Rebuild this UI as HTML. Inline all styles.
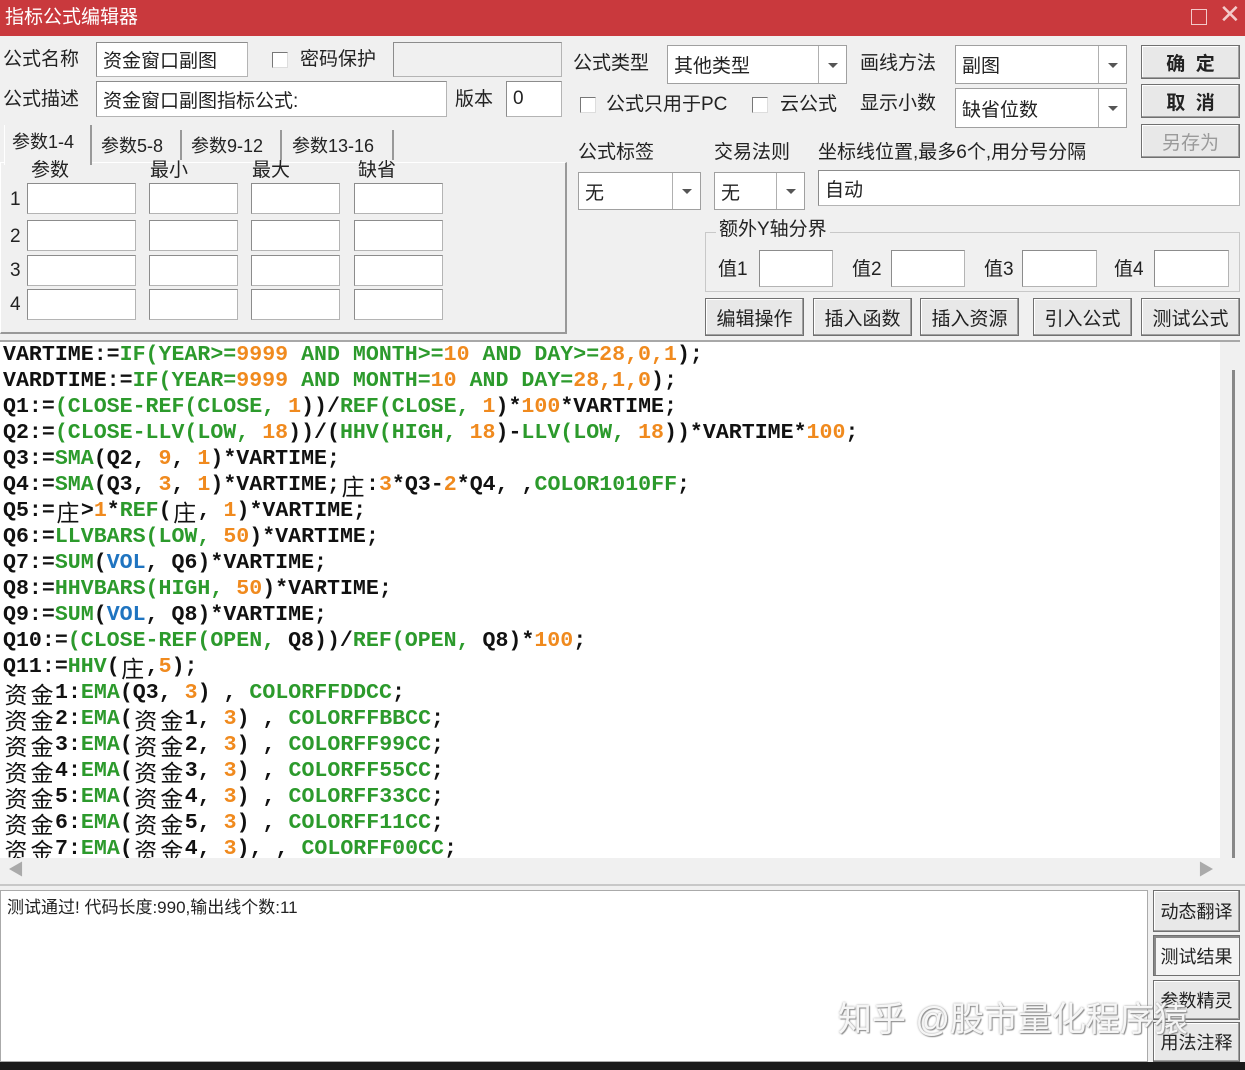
<!DOCTYPE html>
<html><head><meta charset="utf-8"><style>
*{box-sizing:border-box;margin:0;padding:0}
body{width:1245px;height:1070px;overflow:hidden;background:#f0f0f0;position:relative;font-family:"Liberation Sans","Noto Sans CJK SC",sans-serif;font-size:19px;color:#222}
.a{position:absolute;white-space:nowrap}
.t{position:absolute;white-space:nowrap;line-height:22px}
.in{position:absolute;background:#fff;border:1px solid #b4b4b4;border-top-color:#8c8c8c;border-left-color:#8c8c8c;padding-left:6px;display:flex;align-items:center}
.sel{position:absolute;background:#fff;border:1px solid #a0a0a0;padding-left:6px;display:flex;align-items:center}
.sel .ar{position:absolute;right:0;top:0;bottom:0;width:28px;border-left:1px solid #b0b0b0}
.sel .ar:after{content:"";position:absolute;left:9px;top:50%;margin-top:-2px;border-left:5px solid transparent;border-right:5px solid transparent;border-top:5px solid #555}
.btn{position:absolute;background:#e8e8e8;border:1px solid #707070;box-shadow:inset -1px -1px 0 #a0a0a0,inset 1px 1px 0 #fff;display:flex;align-items:center;justify-content:center;font-size:19px}
.cb{position:absolute;width:16px;height:16px;background:#fff;border:1px solid #777;border-right-color:#ddd;border-bottom-color:#ddd}
#code{position:absolute;left:0;top:342px;width:1220px;height:516px;background:#fff;overflow:hidden;font-family:"Liberation Mono",monospace;font-weight:bold;font-size:21.6px;color:#111;padding-left:3px}
#code div{height:26px;line-height:26px;white-space:pre;overflow:hidden}
g{color:#2c9a2c}o{color:#f08a1e}b{color:#1f74c0}
c{display:inline-block;vertical-align:top;height:26px;overflow:hidden;width:26px;font-family:"Noto Sans CJK SC",sans-serif;font-weight:normal;font-size:23px;text-align:center;line-height:26px}
</style></head><body>
<div class="a" style="left:0;top:0;width:1245px;height:36px;background:#c9393d"></div>
<div class="t" style="left:5px;top:7px;color:#fff;font-size:19px">指标公式编辑器</div>
<div class="a" style="left:1191px;top:9px;width:16px;height:16px;border:1.5px solid #f3caca"></div>
<div class="t" style="left:1219px;top:3px;color:#f3caca;font-size:26px;font-weight:200">✕</div>

<div class="t" style="left:3px;top:49px">公式名称</div>
<div class="in" style="left:96px;top:42px;width:152px;height:35px">资金窗口副图</div>
<div class="cb" style="left:272px;top:52px"></div>
<div class="t" style="left:300px;top:49px">密码保护</div>
<div class="in" style="left:393px;top:42px;width:169px;height:35px;background:#f0f0f0"></div>
<div class="t" style="left:3px;top:89px">公式描述</div>
<div class="in" style="left:96px;top:81px;width:351px;height:36px">资金窗口副图指标公式:</div>
<div class="t" style="left:455px;top:89px">版本</div>
<div class="in" style="left:506px;top:81px;width:56px;height:36px">0</div>

<div class="t" style="left:573px;top:53px">公式类型</div>
<div class="sel" style="left:667px;top:45px;width:180px;height:39px">其他类型<span class="ar"></span></div>
<div class="t" style="left:860px;top:53px">画线方法</div>
<div class="sel" style="left:955px;top:45px;width:172px;height:39px">副图<span class="ar"></span></div>
<div class="btn" style="left:1141px;top:45px;width:99px;height:34px;font-weight:bold">确&nbsp;&nbsp;定</div>
<div class="cb" style="left:580px;top:97px"></div>
<div class="t" style="left:606px;top:94px">公式只用于PC</div>
<div class="cb" style="left:752px;top:97px"></div>
<div class="t" style="left:780px;top:94px">云公式</div>
<div class="t" style="left:860px;top:93px">显示小数</div>
<div class="sel" style="left:955px;top:88px;width:172px;height:40px">缺省位数<span class="ar"></span></div>
<div class="btn" style="left:1141px;top:84px;width:99px;height:34px;font-weight:bold">取&nbsp;&nbsp;消</div>
<div class="btn" style="left:1141px;top:124px;width:99px;height:34px;color:#9a9a9a">另存为</div>

<div class="t" style="left:578px;top:142px">公式标签</div>
<div class="t" style="left:714px;top:142px">交易法则</div>
<div class="t" style="left:818px;top:142px">坐标线位置,最多6个,用分号分隔</div>
<div class="sel" style="left:578px;top:172px;width:123px;height:38px">无<span class="ar"></span></div>
<div class="sel" style="left:714px;top:172px;width:91px;height:38px">无<span class="ar"></span></div>
<div class="in" style="left:818px;top:170px;width:422px;height:36px">自动</div>

<div class="a" style="left:705px;top:232px;width:535px;height:60px;border:1px solid #c8c8c8"></div>
<div class="t" style="left:716px;top:219px;background:#f0f0f0;padding:0 3px">额外Y轴分界</div>
<div class="t" style="left:718px;top:259px">值1</div><div class="in" style="left:759px;top:250px;width:74px;height:37px"></div>
<div class="t" style="left:852px;top:259px">值2</div><div class="in" style="left:891px;top:250px;width:74px;height:37px"></div>
<div class="t" style="left:984px;top:259px">值3</div><div class="in" style="left:1022px;top:250px;width:75px;height:37px"></div>
<div class="t" style="left:1114px;top:259px">值4</div><div class="in" style="left:1154px;top:250px;width:75px;height:37px"></div>

<div class="btn" style="left:705px;top:298px;width:99px;height:38px">编辑操作</div>
<div class="btn" style="left:813px;top:298px;width:99px;height:38px">插入函数</div>
<div class="btn" style="left:920px;top:298px;width:99px;height:38px">插入资源</div>
<div class="btn" style="left:1033px;top:298px;width:99px;height:38px">引入公式</div>
<div class="btn" style="left:1141px;top:298px;width:99px;height:38px">测试公式</div>

<div class="a" style="left:0;top:162px;width:567px;height:172px;border:1px solid #fff;border-right:2px solid #999;border-bottom:2px solid #999"></div>
<div class="a" style="left:4px;top:125px;width:88px;height:40px;background:#f0f0f0;border-left:1px solid #fff;border-right:2px solid #999"></div>
<div class="t" style="left:12px;top:131px;font-size:18px">参数1-4</div>
<div class="t" style="left:101px;top:135px;font-size:18px">参数5-8</div>
<div class="a" style="left:180px;top:130px;width:2px;height:30px;background:#999"></div>
<div class="t" style="left:191px;top:135px;font-size:18px">参数9-12</div>
<div class="a" style="left:280px;top:130px;width:2px;height:30px;background:#999"></div>
<div class="t" style="left:292px;top:135px;font-size:18px">参数13-16</div>
<div class="a" style="left:392px;top:130px;width:2px;height:30px;background:#999"></div>
<div class="t" style="left:31px;top:160px">参数</div>
<div class="t" style="left:150px;top:160px">最小</div>
<div class="t" style="left:252px;top:160px">最大</div>
<div class="t" style="left:358px;top:160px">缺省</div>
<div class="t" style="left:10px;top:189px">1</div><div class="t" style="left:10px;top:226px">2</div><div class="t" style="left:10px;top:260px">3</div><div class="t" style="left:10px;top:294px">4</div>
<div class="in" style="left:27px;top:183px;width:109px;height:31px"></div><div class="in" style="left:149px;top:183px;width:89px;height:31px"></div><div class="in" style="left:251px;top:183px;width:89px;height:31px"></div><div class="in" style="left:354px;top:183px;width:89px;height:31px"></div>
<div class="in" style="left:27px;top:220px;width:109px;height:31px"></div><div class="in" style="left:149px;top:220px;width:89px;height:31px"></div><div class="in" style="left:251px;top:220px;width:89px;height:31px"></div><div class="in" style="left:354px;top:220px;width:89px;height:31px"></div>
<div class="in" style="left:27px;top:255px;width:109px;height:31px"></div><div class="in" style="left:149px;top:255px;width:89px;height:31px"></div><div class="in" style="left:251px;top:255px;width:89px;height:31px"></div><div class="in" style="left:354px;top:255px;width:89px;height:31px"></div>
<div class="in" style="left:27px;top:289px;width:109px;height:31px"></div><div class="in" style="left:149px;top:289px;width:89px;height:31px"></div><div class="in" style="left:251px;top:289px;width:89px;height:31px"></div><div class="in" style="left:354px;top:289px;width:89px;height:31px"></div>

<div class="a" style="left:0;top:340px;width:1240px;height:2px;background:#a8a8a8"></div>
<div id="code">
<div>VARTIME:=<g>IF(YEAR&gt;=</g><o>9999</o> <g>AND MONTH&gt;=</g><o>10</o> <g>AND DAY&gt;=</g><o>28,0,1</o>);</div>
<div>VARDTIME:=<g>IF(YEAR=</g><o>9999</o> <g>AND MONTH=</g><o>10</o> <g>AND DAY=</g><o>28,1,0</o>);</div>
<div>Q1:=<g>(CLOSE-REF(CLOSE,</g> <o>1</o>))/<g>REF(CLOSE,</g> <o>1</o>)*<o>100</o>*VARTIME;</div>
<div>Q2:=<g>(CLOSE-LLV(LOW,</g> <o>18</o>))/(<g>HHV(HIGH,</g> <o>18</o>)-<g>LLV(LOW,</g> <o>18</o>))*VARTIME*<o>100</o>;</div>
<div>Q3:=<g>SMA</g>(Q2, <o>9</o>, <o>1</o>)*VARTIME;</div>
<div>Q4:=<g>SMA</g>(Q3, <o>3</o>, <o>1</o>)*VARTIME;<c>庄</c>:<o>3</o>*Q3-<o>2</o>*Q4, ,<g>COLOR1010FF</g>;</div>
<div>Q5:=<c>庄</c>&gt;<o>1</o>*<g>REF</g>(<c>庄</c>, <o>1</o>)*VARTIME;</div>
<div>Q6:=<g>LLVBARS(LOW,</g> <o>50</o>)*VARTIME;</div>
<div>Q7:=<g>SUM</g>(<b>VOL</b>, Q6)*VARTIME;</div>
<div>Q8:=<g>HHVBARS(HIGH,</g> <o>50</o>)*VARTIME;</div>
<div>Q9:=<g>SUM</g>(<b>VOL</b>, Q8)*VARTIME;</div>
<div>Q10:=<g>(CLOSE-REF(OPEN,</g> Q8))/<g>REF(OPEN,</g> Q8)*<o>100</o>;</div>
<div>Q11:=<g>HHV</g>(<c>庄</c>,<o>5</o>);</div>
<div><c>资</c><c>金</c>1:<g>EMA</g>(Q3, <o>3</o>) , <g>COLORFFDDCC</g>;</div>
<div><c>资</c><c>金</c>2:<g>EMA</g>(<c>资</c><c>金</c>1, <o>3</o>) , <g>COLORFFBBCC</g>;</div>
<div><c>资</c><c>金</c>3:<g>EMA</g>(<c>资</c><c>金</c>2, <o>3</o>) , <g>COLORFF99CC</g>;</div>
<div><c>资</c><c>金</c>4:<g>EMA</g>(<c>资</c><c>金</c>3, <o>3</o>) , <g>COLORFF55CC</g>;</div>
<div><c>资</c><c>金</c>5:<g>EMA</g>(<c>资</c><c>金</c>4, <o>3</o>) , <g>COLORFF33CC</g>;</div>
<div><c>资</c><c>金</c>6:<g>EMA</g>(<c>资</c><c>金</c>5, <o>3</o>) , <g>COLORFF11CC</g>;</div>
<div><c>资</c><c>金</c>7:<g>EMA</g>(<c>资</c><c>金</c>4, <o>3</o>), , <g>COLORFF00CC</g>;</div>
</div>
<div class="a" style="left:1220px;top:342px;width:20px;height:516px;background:#f0f0f0"></div>
<div class="a" style="left:1232px;top:370px;width:3px;height:488px;background:#888"></div>
<div class="a" style="left:0;top:858px;width:1220px;height:24px;background:#f0f0f0"></div>
<div class="t" style="left:8px;top:860px;color:#aaa;font-size:16px">◀</div>
<div class="t" style="left:1198px;top:860px;color:#aaa;font-size:16px">▶</div>
<div class="a" style="left:0;top:884px;width:1245px;height:2px;background:#c8c8c8"></div>

<div class="a" style="left:0;top:890px;width:1148px;height:172px;background:#fff;border:1px solid #aaa"></div>
<div class="t" style="left:7px;top:897px;font-size:17px;color:#222">测试通过! 代码长度:990,输出线个数:11</div>
<div class="btn" style="left:1153px;top:890px;width:87px;height:42px;font-size:18px">动态翻译</div>
<div class="btn" style="left:1153px;top:935px;width:87px;height:41px;font-size:18px;box-shadow:inset 2px 2px 0 #888;background:#f4f4f4">测试结果</div>
<div class="btn" style="left:1153px;top:980px;width:87px;height:40px;font-size:18px">参数精灵</div>
<div class="btn" style="left:1153px;top:1022px;width:87px;height:40px;font-size:18px">用法注释</div>
<div class="t" style="left:838px;top:1000px;font-size:34px;line-height:40px;color:rgba(255,255,255,.9);text-shadow:0 0 2px #999,1px 1px 1px #888">知乎 @股市量化程序猿</div>
<div class="a" style="left:0;top:1062px;width:1245px;height:8px;background:#1a1a1a"></div>
</body></html>
